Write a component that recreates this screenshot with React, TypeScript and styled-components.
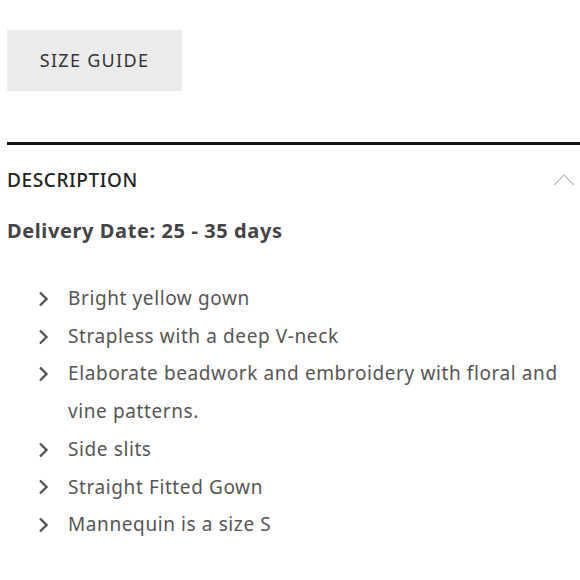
import React from "react";
import styled, { createGlobalStyle } from "styled-components";

const Global = createGlobalStyle`
  html, body { margin: 0; padding: 0; background: #fff; }
  body { font-family: "Noto Sans", "Open Sans", sans-serif; }
`;

const Page = styled.div`
  padding: 30px 0 0 7px;
  width: 573px;
`;

const SizeButton = styled.button`
  display: block;
  width: 175px;
  height: 61px;
  background: #ebebeb;
  border: none;
  font-family: "Noto Sans", sans-serif;
  font-size: 18px;
  letter-spacing: 1.3px;
  color: #333;
  padding: 0 0 2px 0;
  margin: 0 0 51px 0;
`;

const Section = styled.section`
  border-top: 3px solid #111;
`;

const Header = styled.div`
  display: flex;
  align-items: center;
  justify-content: space-between;
  height: 70px;
  padding-right: 5px;
`;

const Title = styled.h2`
  margin: 0;
  font-size: 19px;
  font-weight: 500;
  color: #222;
  letter-spacing: 0.6px;
`;

const Delivery = styled.p`
  margin: 2px 0 35px 0;
  font-size: 20px;
  font-weight: 700;
  color: #444;
  line-height: 28px;
  letter-spacing: 0.6px;
`;

const List = styled.ul`
  list-style: none;
  margin: 0;
  padding: 0 0 0 30px;
`;

const Item = styled.li`
  display: flex;
  align-items: flex-start;
  font-size: 19px;
  line-height: 37.7px;
  color: #555;
  letter-spacing: 0.6px;
`;

const Bullet = styled.span`
  flex: 0 0 31px;
  height: 37.7px;
  display: flex;
  align-items: center;
`;

const Chevron = () => (
  <svg width="12" height="16" viewBox="0 0 12 16">
    <path d="M3 1.5 L9.5 8 L3 14.5" fill="none" stroke="#555" strokeWidth="2.4" />
  </svg>
);

const ChevronUp = () => (
  <svg width="22" height="12" viewBox="0 0 22 12">
    <path d="M1 11 L11 1 L21 11" fill="none" stroke="#bbb" strokeWidth="1.2" />
  </svg>
);

const items = [
  "Bright yellow gown",
  "Strapless with a deep V-neck",
  "Elaborate beadwork and embroidery with floral and vine patterns.",
  "Side slits",
  "Straight Fitted Gown",
  "Mannequin is a size S",
];

export default function App() {
  return (
    <>
      <Global />
      <Page>
        <SizeButton>SIZE GUIDE</SizeButton>
        <Section>
          <Header>
            <Title>DESCRIPTION</Title>
            <ChevronUp />
          </Header>
          <Delivery>Delivery Date: 25 - 35 days</Delivery>
          <List>
            {items.map((t) => (
              <Item key={t}>
                <Bullet>
                  <Chevron />
                </Bullet>
                <span>{t}</span>
              </Item>
            ))}
          </List>
        </Section>
      </Page>
    </>
  );
}
